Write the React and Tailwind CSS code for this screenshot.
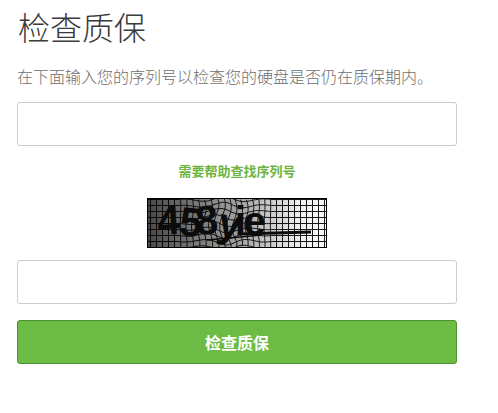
const cjk = { fontFamily: '"Noto Sans CJK SC", "Liberation Sans", sans-serif' };

const warp = (x, y) => {
  const k = Math.max(0, 1 - Math.abs(x - 78) / 48);
  return [x + k * 3 * Math.sin(y / 6), y + k * 3.5 * Math.sin(x / 7 + y / 14)];
};

function linePath(pts) {
  return pts.map(([x, y], i) => `${i ? "L" : "M"}${warp(x, y).map((n) => n.toFixed(1)).join(" ")}`).join("");
}

function Captcha() {
  const cols = Array.from({ length: 30 }, (_, i) => i * 6 + 3.5);
  const rows = Array.from({ length: 9 }, (_, i) => i * 6 + 1.5);
  const ys = Array.from({ length: 26 }, (_, i) => i * 2);
  const xs = Array.from({ length: 91 }, (_, i) => i * 2);
  return (
    <svg width="180" height="50" viewBox="0 0 180 50" className="block">
      <defs>
        <linearGradient id="g" x1="0" x2="1" y1="0" y2="0">
          <stop offset="0" stopColor="#484848" />
          <stop offset="0.5" stopColor="#a0a0a0" />
          <stop offset="0.85" stopColor="#f0f0f0" />
          <stop offset="1" stopColor="#fafafa" />
        </linearGradient>
      </defs>
      <rect width="180" height="50" fill="url(#g)" />
      <g fill="none" stroke="#000" strokeWidth="1" opacity="0.9">
        {cols.map((c) => (
          <path key={c} d={linePath(ys.map((y) => [c, y]))} />
        ))}
        {rows.map((r) => (
          <path key={r} d={linePath(xs.map((x) => [x, r]))} />
        ))}
      </g>
      <text x="11" y="37" fontFamily="Liberation Sans" fontSize="41" fontWeight="700" fill="#0c0c0c" rotate="-3 6 -4 12 0 0" dx="0 -2.5 -5 -3 -4 -3">
        458yie
      </text>
      <path d="M92 36 L164 34" stroke="#0c0c0c" strokeWidth="3" fill="none" />
      <path d="M60 42 L115 37" stroke="#0c0c0c" strokeWidth="1.5" fill="none" />
      <rect x="0.5" y="0.5" width="179" height="49" fill="none" stroke="#000" />
    </svg>
  );
}

export default function App() {
  return (
    <div className="w-[498px] h-[413px] bg-white px-[17px] pt-[6px]" style={cjk}>
      <div className="w-[440px]">
        <h1 className="text-[32px] leading-[40px] font-light text-[#3a3a3a] pl-px">检查质保</h1>
        <p className="mt-[19px] text-[16px] leading-[22px] font-light text-[#6e6e6e]">在下面输入您的序列号以检查您的硬盘是否仍在质保期内。</p>
        <input className="mt-[15px] block w-full h-[44px] rounded-[3px] border border-[#cccccc] bg-white" />
        <div className="mt-[16px] text-center text-[13px] leading-[18px] font-bold text-[#6cb33f]">需要帮助查找序列号</div>
        <div className="mt-[18px] flex justify-center">
          <Captcha />
        </div>
        <input className="mt-[12px] block w-full h-[44px] rounded-[3px] border border-[#cccccc] bg-white" />
        <button className="mt-[16px] block w-full h-[44px] rounded-[3px] border border-[#4f9032] bg-[#6cbb45] text-[16px] font-bold text-white">检查质保</button>
      </div>
    </div>
  );
}
